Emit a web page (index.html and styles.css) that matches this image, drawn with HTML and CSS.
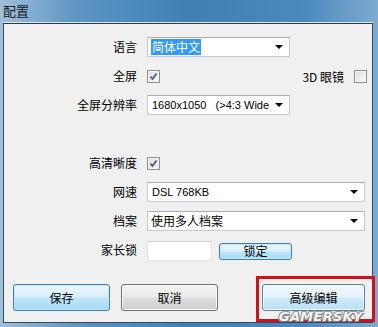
FILE: index.html
```html
<!DOCTYPE html>
<html lang="zh-CN">
<head>
  <meta charset="UTF-8" />
  <title>配置</title>
  <link rel="stylesheet" href="styles.css">
</head>
<body>
  <div class="window">
    <div class="titlebar">配置</div>

    <div class="panel">
      <div class="form">
        <label class="label">语言</label>
        <div class="control">
          <div class="combo short">
            <span class="value"><span class="selected">简体中文</span></span>
            <span class="arrow"></span>
          </div>
        </div>

        <label class="label">全屏</label>
        <div class="control split">
          <span class="check on"><svg viewBox="0 0 9 9"><path d="M1.5 4.5 L3.5 7 L7.5 1.5" /></svg></span>
          <span class="side">
            <span class="side-label">3D 眼镜</span>
            <span class="check"></span>
          </span>
        </div>

        <label class="label">全屏分辨率</label>
        <div class="control">
          <div class="combo short">
            <span class="value latin">1680x1050&nbsp;&nbsp;&nbsp;(&gt;4:3 Wide</span>
            <span class="arrow"></span>
          </div>
        </div>

        <div class="spacer"></div>

        <label class="label">高清晰度</label>
        <div class="control">
          <span class="check on"><svg viewBox="0 0 9 9"><path d="M1.5 4.5 L3.5 7 L7.5 1.5" /></svg></span>
        </div>

        <label class="label">网速</label>
        <div class="control">
          <div class="combo">
            <span class="value latin">DSL 768KB</span>
            <span class="arrow"></span>
          </div>
        </div>

        <label class="label">档案</label>
        <div class="control">
          <div class="combo">
            <span class="value">使用多人档案</span>
            <span class="arrow"></span>
          </div>
        </div>

        <label class="label">家长锁</label>
        <div class="control lock">
          <input type="text" class="field">
          <button class="btn blue small">锁定</button>
        </div>
      </div>

      <div class="actions">
        <button class="btn blue">保存</button>
        <button class="btn">取消</button>
        <button class="btn hover wide">高级编辑</button>
      </div>

      <!-- annotation drawn on top of the dialog -->
      <div class="mark"></div>
      <div class="watermark">GAMERSKY</div>
    </div>
  </div>
</body>
</html>
```

FILE: styles.css
```css
:root {
  --frame: #5b8fbf;
  --panel: #f0f0f0;
  --text: #000000;
}

* {
  box-sizing: border-box;
}

body {
  margin: 0;
  width: 378px;
  height: 327px;
  overflow: hidden;
  font-family: "Noto Sans CJK SC", "Liberation Sans", sans-serif;
  font-size: 12px;
  color: var(--text);
}

.window {
  width: 378px;
  height: 327px;
  padding: 0 5px 4px 3px;
  display: flex;
  flex-direction: column;
  background: linear-gradient(to right, #9fc0da 0%, #5d95c3 20%, #3f80b5 50%, #4a89bd 80%, #7eaad0 100%);
}

.titlebar {
  height: 23px;
  line-height: 21px;
  font-size: 13px;
  color: #1a1a1a;
  border-bottom: 1px solid #dfe8f0;
}

.panel {
  position: relative;
  flex: 1;
  background: var(--panel);
  border: 1px solid #34495c;
  border-top-color: #2a3b4c;
  padding: 13px 7px 0 9px;
}

.form {
  display: grid;
  grid-template-columns: 124px 1fr;
  grid-auto-rows: 20px;
  column-gap: 10px;
  row-gap: 9px;
}

.label {
  text-align: right;
  line-height: 20px;
  white-space: nowrap;
}

.control {
  display: flex;
  align-items: center;
}

.split {
  justify-content: space-between;
}

.side {
  display: flex;
  align-items: center;
  gap: 10px;
  margin-right: -2px;
}

.spacer {
  grid-column: 1 / -1;
}

/* combo boxes */
.combo {
  width: 100%;
  height: 20px;
  background: #ffffff;
  border: 1px solid #c5c9d0;
  border-top-color: #abadb3;
  display: flex;
  align-items: center;
  justify-content: space-between;
  padding: 0 6px 0 3px;
}

.combo.short {
  width: 143px;
}

.value {
  flex: 1;
  white-space: nowrap;
  overflow: hidden;
  line-height: 16px;
  margin-right: 6px;
}

.latin {
  font-family: "Liberation Sans", sans-serif;
  font-size: 11px;
  padding-left: 1px;
}

.selected {
  background: #3399ff;
  color: #ffffff;
  padding: 0 1px;
}

.arrow {
  width: 0;
  height: 0;
  border-left: 4px solid transparent;
  border-right: 4px solid transparent;
  border-top: 4px solid #000000;
  flex-shrink: 0;
}

/* checkboxes */
.check {
  width: 13px;
  height: 13px;
  border: 1px solid #8f8f8f;
  background: linear-gradient(135deg, #dcdcdc, #fbfbfb);
  box-shadow: inset 0 0 0 1px #f4f4f4;
  display: flex;
  align-items: center;
  justify-content: center;
}

.check svg {
  width: 9px;
  height: 9px;
}

.check path {
  fill: none;
  stroke: #4a5d87;
  stroke-width: 1.8;
}

/* parental lock row */
.lock {
  gap: 7px;
  margin-top: 2px;
}

.field {
  width: 65px;
  height: 20px;
  border: 1px solid #e2e3e6;
  border-top-color: #d0d2d6;
  background: #ffffff;
  margin: 0;
}

/* buttons */
.btn {
  font-family: "Noto Sans CJK SC", sans-serif;
  font-size: 12px;
  color: #000000;
  width: 97px;
  height: 27px;
  padding: 0;
  border: 1px solid #707070;
  border-radius: 3px;
  background: linear-gradient(#f2f2f2 0%, #ebebeb 48%, #dddddd 52%, #cfcfcf 100%);
  box-shadow: inset 0 0 0 1px #fbfbfb;
}

.btn.blue {
  border-color: #3c7fb1;
  background: linear-gradient(#eaf6fd 0%, #d9f0fc 48%, #bee6fd 52%, #a7d9f5 100%);
  box-shadow: inset 0 0 0 1px #c8e6f7;
}

.btn.hover {
  border-color: #5a7fa0;
  background: linear-gradient(#f0f8fd 0%, #e3f3fc 48%, #cdeafa 52%, #b9e0f6 100%);
}

.btn.small {
  width: 73px;
  height: 17px;
  line-height: 14px;
}

.btn.wide {
  width: 103px;
  margin-left: auto;
}

.actions {
  display: flex;
  gap: 11px;
  margin-top: 24px;
}

/* red annotation box and site watermark */
.mark {
  position: absolute;
  left: 252px;
  top: 252px;
  width: 119px;
  height: 46px;
  border: 3px solid #d0111c;
}

.watermark {
  position: absolute;
  left: 275px;
  top: 285px;
  font-family: "DejaVu Sans", sans-serif;
  font-weight: bold;
  font-style: italic;
  font-size: 13px;
  letter-spacing: 0.3px;
  color: #f4f4f4;
  text-shadow: 1px 1px 0 #7a7a7a, -1px -1px 0 #9a9a9a, 1px -1px 0 #9a9a9a, -1px 1px 0 #9a9a9a;
}
```
